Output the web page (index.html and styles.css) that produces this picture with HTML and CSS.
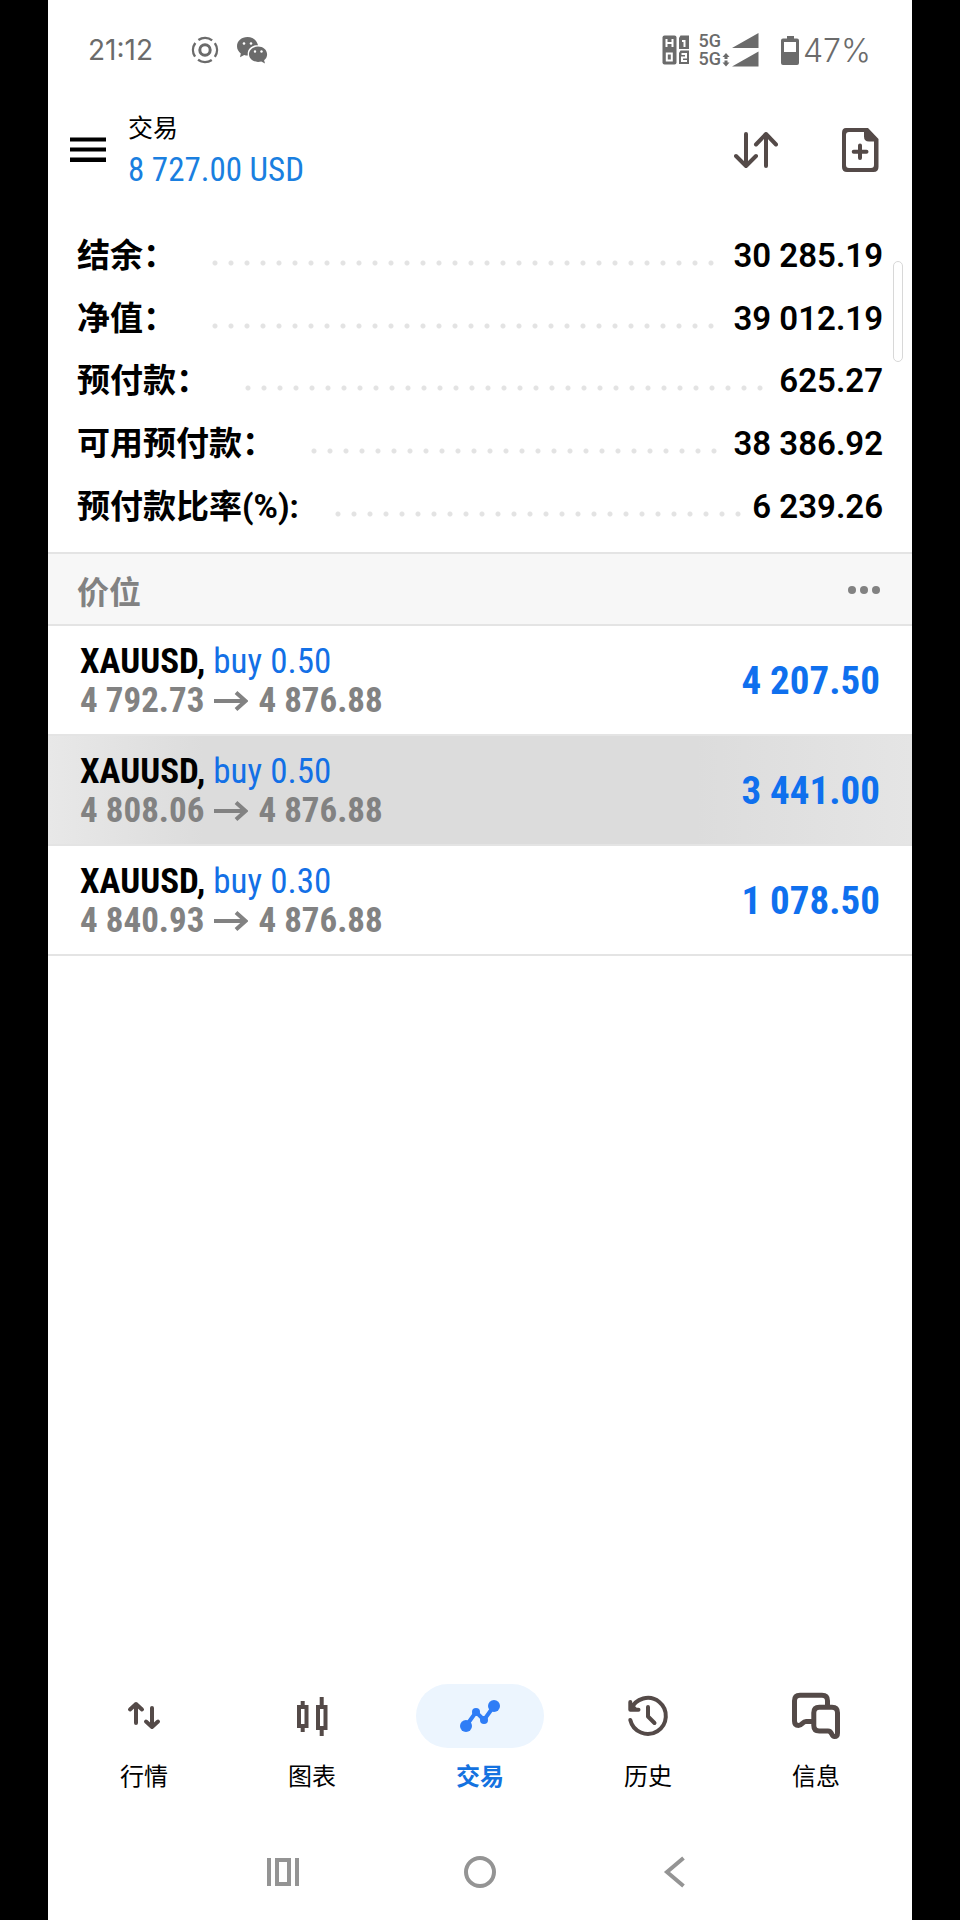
FILE: index.html
```html
<!DOCTYPE html>
<html lang="zh-CN">
<head>
<meta charset="utf-8">
<meta name="viewport" content="width=device-width, initial-scale=1">
<title>交易</title>
<link rel="stylesheet" href="styles.css">
</head>
<body>
<div class="phone">
  <div class="status">
    <span class="clock">21:12</span>
    <svg class="status-cast" width="28" height="28" viewBox="0 0 28 28" fill="none" stroke="#6b6b6b" aria-hidden="true">
      <circle cx="14" cy="14" r="5.2" stroke-width="3"/>
      <circle cx="14" cy="14" r="12" stroke-width="2.400" stroke-dasharray="14.500 4.350" transform="rotate(-35 14 14)"/>
    </svg>
    <svg class="status-chat" width="32" height="28" viewBox="0 0 32 28" fill="#6b6b6b" aria-hidden="true">
      <path d="M11.500 1C5.400 1 1 5 1 10.200c0 3 1.500 5.500 3.800 7.200L4 21.200l4.200-2.300c1.200.4 2.300.5 3.600.5C11 13 16 9 22 9.300 21 4.300 16.800 1 11.500 1Z"/>
      <path d="M22 10.500c-5 0-9 3.400-9 7.700s4 7.700 9 7.700c1.200 0 2.300-.2 3.300-.5l3.700 2-.9-3.200c1.900-1.400 3-3.500 3-6 0-4.300-4-7.700-9.100-7.700Z"/>
      <g fill="#fff"><circle cx="8" cy="7.500" r="1.300"/><circle cx="15" cy="7.500" r="1.300"/><circle cx="19" cy="15.500" r="1.200"/><circle cx="25.500" cy="15.500" r="1.200"/></g>
    </svg>
    <div class="status-right">
      <svg width="28" height="30" viewBox="0 0 28 30" aria-hidden="true">
        <rect x="0.500" y="0.500" width="14" height="29" rx="2" fill="#6b6b6b"/>
        <path d="M18.500 .5H27V14H17V3Z" fill="#6b6b6b"/><path d="M18.500 15.500H27v13.500H17V18Z" fill="#6b6b6b"/>
        <path d="M4.500 4v8M10.500 4v8M4.500 8h6M4.800 18.500h5v7h-5ZM20 6h2.500v6M19.500 19h4.500v3.500h-4v3.500h5" fill="none" stroke="#fff" stroke-width="2"/>
      </svg>
      <div class="net"><span>5G</span><span>5G</span></div>
      <svg class="signal" width="37" height="34" viewBox="0 0 37 34" fill="#6b6b6b" aria-hidden="true">
        <path d="M36.500 0v15H10ZM36.500 18.500v15H10ZM4 20l3.500 4h-2v2h-3v-2h-2ZM4 33.500l3.500-4h-2v-2h-3v2h-2Z"/>
      </svg>
      <svg class="battery" width="18" height="29" viewBox="0 0 18 29" aria-hidden="true">
        <path d="M6 0h7v2.500h3q2 0 2 2V27q0 2-2 2H2q-2 0-2-2V4.500q0-2 2-2h4Z" fill="#6b6b6b"/>
        <rect x="3" y="6" width="12" height="10" fill="#fff"/>
      </svg>
      <span class="percent">47%</span>
    </div>
  </div>

  <header class="top">
    <button class="icon-btn" aria-label="菜单">
      <svg width="36" height="26" viewBox="0 0 36 26" fill="#000"><path d="M0 .5h36v4H0ZM0 10.500h36v4H0ZM0 20.500h36v4.500H0Z"/></svg>
    </button>
    <div class="heading">
      <h1 class="title">交易</h1>
      <div class="profit-total">8 727.00 USD</div>
    </div>
    <div class="actions">
      <button class="icon-btn" aria-label="排序">
        <svg width="44" height="38" viewBox="0 0 44 38" fill="none" stroke="#544a48" stroke-width="4" stroke-linecap="round" stroke-linejoin="round"><path d="M12 3v32M2 25l10 10 10-10M32 35V3M22 13.500L32 3l10 10.500"/></svg>
      </button>
      <button class="icon-btn" aria-label="新订单">
        <svg width="38" height="46" viewBox="0 0 38 46"><path fill-rule="evenodd" fill="#544a48" d="M5 1h22l10.500 11v28q0 5-5 5H6q-5 0-5-5V6q0-5 4-5ZM8 5q-3 0-3 3v30q0 3 3 3h22q3 0 3-3V14.500h-5q-5 0-5-5V5Z"/><path d="M19 18.500v12.500M12.700 24.800h12.800" stroke="#544a48" stroke-width="4" stroke-linecap="round"/></svg>
      </button>
    </div>
  </header>

  <main class="content">
    <dl class="summary">
      <div class="line"><dt>结余：</dt><dd><span class="dots"></span>30 285.19</dd></div>
      <div class="line"><dt>净值：</dt><dd><span class="dots"></span>39 012.19</dd></div>
      <div class="line"><dt>预付款：</dt><dd><span class="dots"></span>625.27</dd></div>
      <div class="line"><dt>可用预付款：</dt><dd><span class="dots"></span>38 386.92</dd></div>
      <div class="line"><dt>预付款比率(%):</dt><dd><span class="dots"></span>6 239.26</dd></div>
    </dl>
    <div class="scroll-thumb"></div>

    <div class="section">
      <h2 class="section-title">价位</h2>
      <button class="icon-btn" aria-label="更多">
        <svg width="32" height="8" viewBox="0 0 32 8" fill="#828282"><circle cx="4" cy="4" r="4"/><circle cx="16" cy="4" r="4"/><circle cx="28" cy="4" r="4"/></svg>
      </button>
    </div>

    <ul class="positions">
      <li class="position">
        <div>
          <div class="deal"><b>XAUUSD,</b> <span class="side">buy 0.50</span></div>
          <div class="prices">4 792.73 <svg class="arrow" width="34" height="20" viewBox="0 0 34 20"><path d="M0 10h31M22 1.500l9.500 8.500-9.500 8.500"/></svg> 4 876.88</div>
        </div>
        <div class="profit">4 207.50</div>
      </li>
      <li class="position pressed">
        <div>
          <div class="deal"><b>XAUUSD,</b> <span class="side">buy 0.50</span></div>
          <div class="prices">4 808.06 <svg class="arrow" width="34" height="20" viewBox="0 0 34 20"><path d="M0 10h31M22 1.500l9.500 8.500-9.500 8.500"/></svg> 4 876.88</div>
        </div>
        <div class="profit">3 441.00</div>
      </li>
      <li class="position">
        <div>
          <div class="deal"><b>XAUUSD,</b> <span class="side">buy 0.30</span></div>
          <div class="prices">4 840.93 <svg class="arrow" width="34" height="20" viewBox="0 0 34 20"><path d="M0 10h31M22 1.500l9.500 8.500-9.500 8.500"/></svg> 4 876.88</div>
        </div>
        <div class="profit">1 078.50</div>
      </li>
    </ul>
  </main>

  <nav class="tabs">
    <a class="tab" href="#quotes">
      <span class="pill"><svg width="48" height="48" viewBox="0 0 48 48" fill="none" stroke="#544a48" stroke-width="4" stroke-linecap="round" stroke-linejoin="round"><path d="M16 31V12M10 17.500L16 12l6 5.500M32 16v19M26 29.500l6 5.500 6-5.500"/></svg></span>
      行情
    </a>
    <a class="tab" href="#charts">
      <span class="pill"><svg width="48" height="48" viewBox="0 0 48 48" fill="none" stroke="#544a48" stroke-width="4"><path d="M11 15h7.500v19H11ZM30 15h7.500v21H30ZM14.700 9v6M14.700 34v6M33.700 5v10M33.700 36v8"/></svg></span>
      图表
    </a>
    <a class="tab active" href="#trade" aria-current="page">
      <span class="pill"><svg width="48" height="48" viewBox="0 0 48 48" fill="#2f7df6"><path d="M10 34l10-14 8 8 10-14" fill="none" stroke="#2f7df6" stroke-width="4"/><circle cx="10" cy="34" r="6"/><circle cx="20" cy="20" r="4"/><circle cx="28" cy="28" r="4"/><circle cx="38" cy="14" r="6"/></svg></span>
      交易
    </a>
    <a class="tab" href="#history">
      <span class="pill"><svg width="48" height="48" viewBox="0 0 48 48" fill="none" stroke="#544a48" stroke-width="4" stroke-linecap="round" stroke-linejoin="round"><path d="M7 17.500A18 18 0 1 1 6.300 28M24 15v9.500l6.500 6.500M6.300 10v7.800h8.200M7 13l4 4"/></svg></span>
      历史
    </a>
    <a class="tab" href="#messages">
      <span class="pill"><svg width="48" height="48" viewBox="0 0 48 48" fill="none" stroke="#544a48" stroke-width="5" stroke-linejoin="round"><path d="M20 29.500H14c-3.500 0-4 4-7.500 4-2.500 0-4-1.500-4-4.500V8.700q0-5.500 5.500-5.500H30q5.500 0 5.500 5.500V14M27.300 15.200H40q5.500 0 5.500 5.500V41c0 2.500-1 3.500-3 3.500-3.500 0-2-5.500-6.500-5.500h-8.700q-5.500 0-5.500-5.500V20.700q0-5.500 5.500-5.500Z"/></svg></span>
      信息
    </a>
  </nav>

  <div class="system">
    <button class="sys-btn" aria-label="最近任务"><svg width="32" height="32" viewBox="0 0 32 32" fill="none" stroke="#949494" stroke-width="4"><path d="M2 2v28M30 2v28M10 4h12v24H10Z"/></svg></button>
    <button class="sys-btn" aria-label="主屏幕"><svg width="32" height="32" viewBox="0 0 32 32" fill="none" stroke="#949494" stroke-width="4"><circle cx="16" cy="16" r="14"/></svg></button>
    <button class="sys-btn" aria-label="返回"><svg width="32" height="32" viewBox="0 0 32 32" fill="none" stroke="#949494" stroke-width="4"><path d="M22.500 2L6 16l16.500 14"/></svg></button>
  </div>
</div>
</body>
</html>
```
FILE: styles.css
```css
* {
  box-sizing: border-box;
}

body {
  margin: 0;
  padding: 0 5%;
  background: #000;
  font-family: Roboto, "Noto Sans CJK SC", sans-serif;
  color: #000;
}

h1, h2, dl, dd, ul {
  margin: 0;
  padding: 0;
}

button {
  padding: 0;
  border: 0;
  background: none;
}

svg {
  display: block;
  flex: none;
}

.phone {
  display: flex;
  flex-direction: column;
  min-height: 100vh;
  background: #fff;
}

.status {
  display: flex;
  align-items: center;
  height: 100px;
  padding: 0 41px 0 40px;
  color: #6b6b6b;
  font-family: Inter, sans-serif;
}

.clock {
  width: 103px;
  font-size: 28px;
}

.status-chat {
  margin-left: 17px;
}

.status-right {
  display: flex;
  align-items: center;
  margin-left: auto;
}

.net {
  display: flex;
  flex-direction: column;
  margin-left: 8px;
  font: 500 18px/18px Roboto, sans-serif;
}

.signal {
  margin-left: 1px;
}

.battery {
  margin: 0 4px 0 22px;
}

.percent {
  font-size: 32px;
  font-weight: 300;
}

.top {
  display: flex;
  align-items: center;
  height: 100px;
  padding: 0 33px 0 22px;
}

.icon-btn {
  display: flex;
}

.heading {
  padding-top: 4px;
  margin-left: 22px;
}

.title {
  font-size: 25px;
  font-weight: 400;
  line-height: 36px;
}

.profit-total {
  color: #1a7fe0;
  font: 400 33px/46px "Roboto Condensed", Roboto, sans-serif;
}

.actions {
  display: flex;
  align-items: center;
  gap: 63px;
  margin-left: auto;
}

.content {
  position: relative;
}

.summary {
  display: grid;
  grid-auto-rows: 1fr;
  min-height: 352px;
  padding: 25px 29px 14px;
}

.line {
  display: flex;
  align-items: center;
  font-size: 33px;
  font-weight: 700;
  line-height: 48px;
}

.line dd {
  display: flex;
  flex: 1;
  align-items: center;
  font-weight: 600;
}

.dots {
  flex: 1;
  margin: 14px 17px 0 36px;
}

.dots::before {
  content: "";
  display: block;
  width: calc(round(down, 100%, 16px) + 6px);
  height: 6px;
  background: radial-gradient(circle at 3px 3px, #e3e3e3 2px, transparent 3px) 0 0 / 16px 6px repeat-x;
}

.scroll-thumb {
  position: absolute;
  top: 61px;
  right: 9px;
  width: 10px;
  height: 101px;
  border: 1px solid #d8d8d8;
  border-radius: 5px;
  background: #fff;
}

.section {
  display: flex;
  align-items: center;
  justify-content: space-between;
  height: 74px;
  padding: 2px 32px 0 29px;
  border: solid #e4e4e4;
  border-width: 2px 0;
  background: #f7f7f7;
}

.section-title {
  color: #828282;
  font-size: 32px;
  font-weight: 700;
}

.positions {
  list-style: none;
}

.position {
  display: flex;
  align-items: center;
  justify-content: space-between;
  min-height: 110px;
  padding: 2px 32px 0;
  border-bottom: 2px solid #e4e4e4;
  font-family: "Roboto Condensed", Roboto, sans-serif;
  font-size: 35px;
  line-height: 39px;
}

.pressed {
  background: linear-gradient(90deg, #e8e8e8, #dcdcdc 18%, #dcdcdc 75%, #e5e5e5);
}

.side {
  color: #1370e6;
}

.prices {
  display: flex;
  align-items: center;
  gap: 10px;
  color: #828282;
  font-weight: 700;
}

.arrow {
  fill: none;
  stroke: #828282;
  stroke-width: 4;
}

.profit {
  color: #0f70ee;
  font-size: 39px;
  font-weight: 700;
}

.tabs {
  display: flex;
  margin-top: auto;
  padding: 0 12px;
}

.tab {
  display: flex;
  flex: 1;
  flex-direction: column;
  align-items: center;
  gap: 11px;
  color: #000;
  font-size: 24px;
  line-height: 36px;
  text-decoration: none;
}

.pill {
  display: flex;
  align-items: center;
  justify-content: center;
  width: 128px;
  height: 64px;
  border-radius: 32px;
}

.active {
  color: #1472e0;
  font-weight: 700;
}

.active .pill {
  background: #ecf5fe;
}

.system {
  display: flex;
  justify-content: center;
  gap: 101px;
  padding: 29px 0 0;
  height: 125px;
}

.sys-btn {
  display: flex;
  align-items: center;
  justify-content: center;
  width: 96px;
  height: 96px;
}
```
